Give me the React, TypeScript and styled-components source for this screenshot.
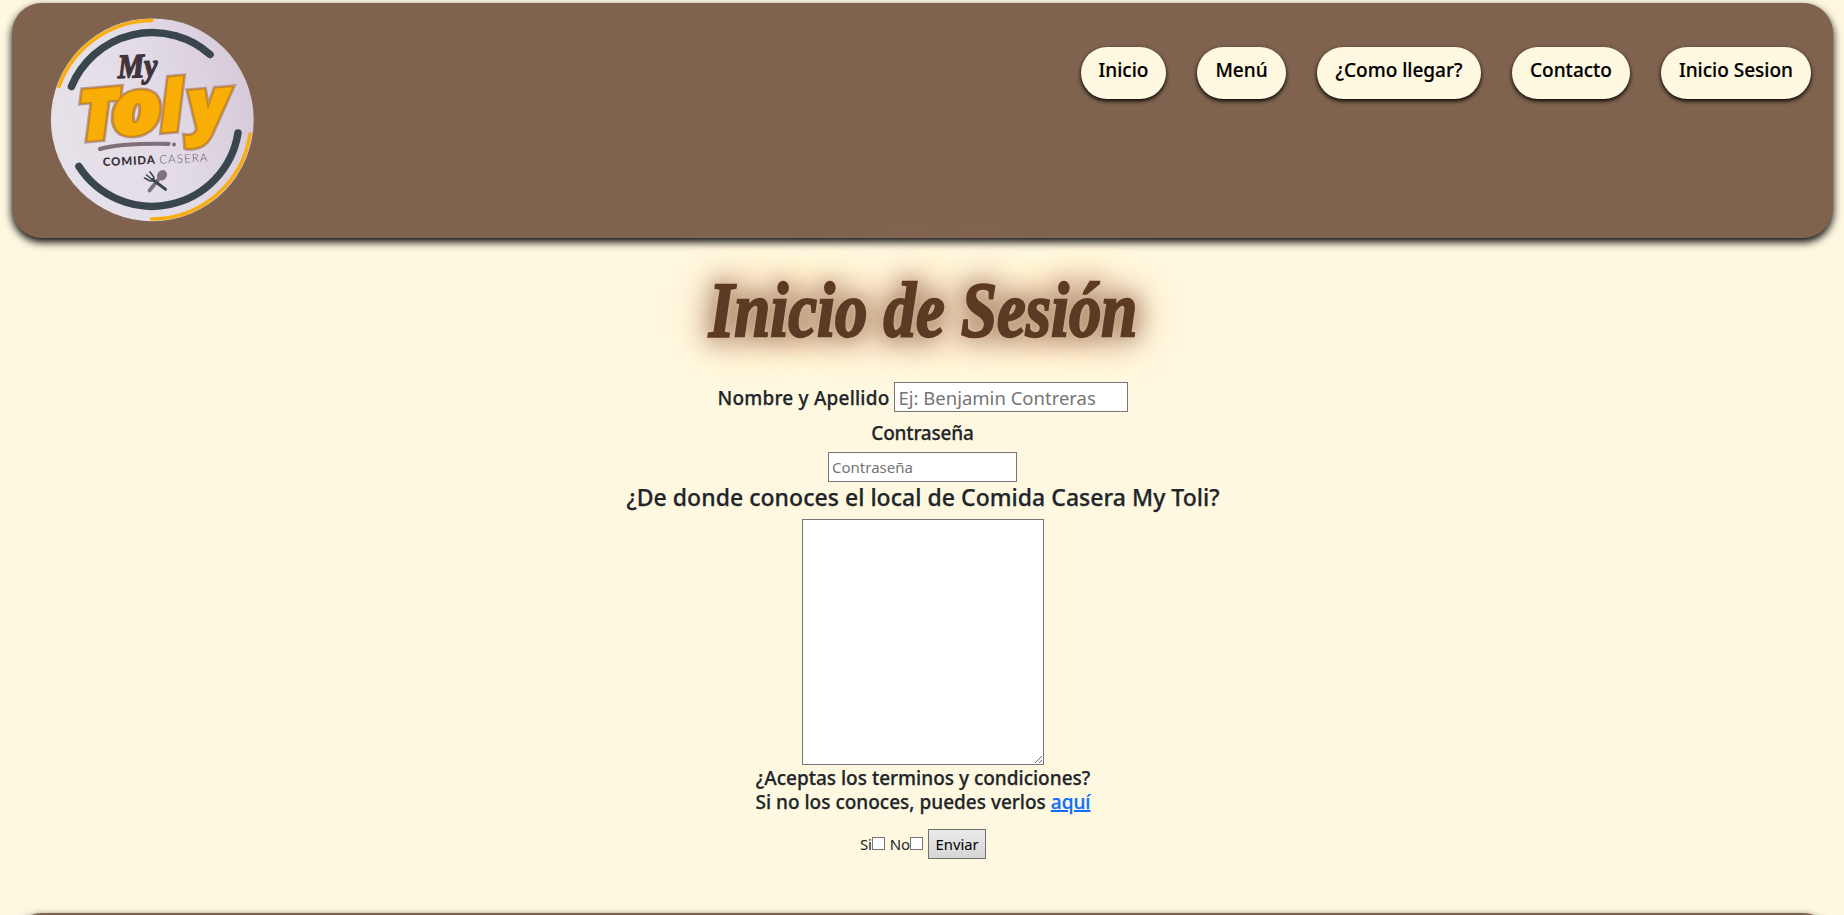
import React from 'react';
import styled, { createGlobalStyle } from 'styled-components';

const cream = '#fff8e1';
const brown = '#7f634e';

const GlobalStyle = createGlobalStyle`
  * { box-sizing: border-box; }
  html, body { margin: 0; height: 915px; overflow: hidden; }
  body {
    background: ${cream};
    color: #212529;
    font-family: 'Noto Sans', 'Open Sans', sans-serif;
    font-size: 15px;
  }
`;

const Page = styled.div`
  height: 915px;
  overflow: hidden;
  padding: 3px 11px 0 12px;
`;

const Header = styled.header`
  display: flex;
  justify-content: space-between;
  align-items: flex-start;
  height: 235px;
  padding: 15px 22px 0 38px;
  border-radius: 30px;
  background: ${brown};
  box-shadow: 0 4px 8px #000;
`;

const LogoArt = styled.svg`
  display: block;
  width: 204px;
  height: 204px;
`;

const Nav = styled.nav`
  display: flex;
  gap: 31px;
  margin-top: 29px;
`;

const NavLink = styled.a<{ $width: number }>`
  width: ${(p) => p.$width}px;
  height: 52px;
  border-radius: 26px;
  background: ${cream};
  box-shadow: 0 2px 4px #000;
  color: #000;
  font-size: 19px;
  font-weight: 500;
  -webkit-text-stroke: 0.2px currentColor;
  line-height: 47px;
  text-align: center;
  text-decoration: none;
  white-space: nowrap;
`;

const Main = styled.main`
  display: flex;
  flex-direction: column;
  align-items: center;
  padding-left: 1px;
`;

const Title = styled.h1`
  margin: 24px 0 24px;
  height: 96px;
  font: italic 700 79px/96px 'Liberation Serif', serif;
  color: #5d3a23;
  white-space: nowrap;
  transform: scaleX(0.82);
  -webkit-text-stroke: 2.4px #5d3a23;
  text-shadow:
    0 0 5px #dfcbaa,
    0 0 20px #b08a6e,
    0 0 32px #a98466,
    0 0 36px #b8977a,
    0 0 50px #dcc3a2,
    0 0 70px #efcbb0,
    0 0 80px #f6dcc0;
`;

const Form = styled.form`
  position: relative;
  display: flex;
  flex-direction: column;
  align-items: center;
`;

const NameRow = styled.div`
  display: flex;
  align-items: center;
  gap: 5px;
  height: 30px;
  margin-bottom: 8px;
`;

const Label = styled.label`
  font-size: 19px;
  font-weight: 500;
  -webkit-text-stroke: 0.25px currentColor;
  line-height: 24px;
`;

const NameLabel = styled(Label)`
  line-height: 30px;
  padding-top: 1px;
  letter-spacing: 0.2px;
`;

const PasswordLabel = styled(Label)`
  height: 24px;
  padding: 1px 1px 0 0;
  letter-spacing: -0.2px;
  margin-bottom: 8px;
`;

const Input = styled.input<{ $width: number; $size: number }>`
  width: ${(p) => p.$width}px;
  height: 30px;
  padding: 1px 3px;
  border: 1px solid #767676;
  border-radius: 0;
  background: #fff;
  font-family: inherit;
  font-size: ${(p) => p.$size}px;
  &::placeholder { color: #757575; opacity: 1; }
`;

const PasswordInput = styled(Input)`
  margin-right: 1px;
`;

const Question = styled.h4`
  height: 29px;
  margin: 0 0 8px;
  padding-top: 1px;
  font-size: 23px;
  font-weight: 500;
  letter-spacing: 0.03px;
  -webkit-text-stroke: 0.25px currentColor;
  line-height: 29px;
`;

const Answer = styled.textarea`
  display: block;
  width: 242px;
  height: 246px;
  border: 1px solid #767676;
  border-radius: 0;
  background: #fff;
  resize: both;
`;

const Terms = styled.h5`
  height: 48px;
  margin: 0 0 16px;
  padding-top: 1px;
  font-size: 19px;
  font-weight: 500;
  -webkit-text-stroke: 0.25px currentColor;
  line-height: 24px;
  text-align: center;
  a { color: #0d6efd; text-decoration: underline; text-decoration-thickness: 2px; }
`;

const SubmitRow = styled.div`
  display: flex;
  align-items: center;
  height: 30px;
  line-height: 30px;
`;

const Option = styled.label`
  display: flex;
  align-items: center;
  margin-right: 5px;
  letter-spacing: -0.1px;
`;

const Check = styled.input`
  appearance: none;
  width: 13px;
  height: 13px;
  margin: 0 0 1px;
  border: 1px solid #767676;
  background: #fff;
`;

const Submit = styled.button`
  width: 58px;
  height: 30px;
  padding: 0 0 1px;
  border: 1px solid #707070;
  border-radius: 0;
  background: linear-gradient(#e9e9e9, #d6d6d6);
  color: #000;
  font-family: inherit;
  font-size: 14.8px;
`;

const Footer = styled.footer`
  height: 120px;
  margin-top: 54px;
  border-radius: 30px;
  background: ${brown};
  box-shadow: 0 4px 8px #000;
`;

const links = [
  { text: 'Inicio', width: 85 },
  { text: 'Menú', width: 89 },
  { text: '¿Como llegar?', width: 164 },
  { text: 'Contacto', width: 118 },
  { text: 'Inicio Sesion', width: 150 },
];

const letters = [
  { ch: 'T', x: 80, y: 140, size: 69, stretch: 1.05 },
  { ch: 'o', x: 112.5, y: 135.5, size: 75, stretch: 1.14 },
  { ch: 'l', x: 162, y: 131, size: 69, stretch: 1 },
  { ch: 'y', x: 190, y: 130, size: 70, stretch: 1.06 },
];

function Letters({ stroke, width, fill }: { stroke: string; width: number; fill: string }) {
  return (
    <g
      fontFamily="Noto Sans, sans-serif"
      fontWeight={900}
      fontStyle="italic"
      fill={fill}
      stroke={stroke}
      strokeWidth={width}
      paintOrder="stroke"
    >
      {letters.map((l) => (
        <text
          key={l.ch}
          fontSize={l.size}
          transform={`translate(${l.x} ${l.y}) rotate(-5) scale(${l.stretch} 1)`}
        >
          {l.ch}
        </text>
      ))}
    </g>
  );
}

function Logo() {
  return (
    <LogoArt viewBox="50 17.5 204 204">
      <defs>
        <linearGradient id="disc" x1="0" y1="0.6" x2="1" y2="0.3">
          <stop offset="0" stopColor="#e6e2e9" />
          <stop offset="0.5" stopColor="#e3dce7" />
          <stop offset="1" stopColor="#d6c9d9" />
        </linearGradient>
      </defs>
      <circle cx="152.3" cy="119.3" r="101.4" fill="url(#disc)" />
      <g fill="none" strokeLinecap="round">
        <path d="M71.5 86A87.3 87.3 0 0 1 210 54" stroke="#39464e" strokeWidth="7.5" />
        <path d="M79 166A87 87 0 0 0 238 132.5" stroke="#39464e" strokeWidth="7.5" />
        <path d="M59 86A99.3 99.3 0 0 1 152 20" stroke="#f8ae10" strokeWidth="3.6" />
        <path d="M250 133.500A99.3 99.3 0 0 1 151.500 218.500" stroke="#f8ae10" strokeWidth="3.6" />
      </g>
      <text
        transform="translate(118 77.500) rotate(-2) scale(0.88 1)"
        fontFamily="Liberation Serif, serif"
        fontSize="34"
        fontStyle="italic"
        fontWeight="700"
        fill="#42343c"
        stroke="#42343c"
        strokeWidth="1.4"
        strokeLinejoin="round"
      >
        My
      </text>
      <Letters stroke="#b8958f" width={7} fill="#b8958f" />
      <Letters stroke="#c88512" width={4.2} fill="#f9ae05" />
      <Letters stroke="#f9ae05" width={1.6} fill="#f9ae05" />
      <path d="M100 148.500C118 143 145 143 168.500 143.300" fill="none" stroke="#7d7078" strokeWidth="4.2" strokeLinecap="round" />
      <circle cx="174" cy="144" r="2" fill="#7d7078" />
      <g fontFamily="Lato, sans-serif" fontSize="11.4">
        <text transform="translate(103 165.500) rotate(-2.500)" textLength="52" fontWeight="900" fill="#3a3038">COMIDA</text>
        <text transform="translate(159.500 163) rotate(-2.500)" textLength="48" fontWeight="300" fill="#5a5058">CASERA</text>
      </g>
      <g strokeLinecap="round" fill="none">
        <path d="M149.500 190L158 179.500" stroke="#7d7078" strokeWidth="3.6" />
        <ellipse cx="162" cy="174.800" rx="4.700" ry="5.500" transform="rotate(38 162 174.800)" fill="#7d7078" />
        <path d="M152.500 179L165.500 188.800" stroke="#39464e" strokeWidth="3" />
        <path d="M144.500 177.500L150 180.500Q154 181 153.800 176.500L150 171.500M146.500 174.500L152 179" stroke="#39464e" strokeWidth="1.600" />
      </g>
    </LogoArt>
  );
}

export default function App() {
  return (
    <Page>
      <GlobalStyle />
      <Header>
        <Logo />
        <Nav>
          {links.map((l) => (
            <NavLink key={l.text} $width={l.width}>{l.text}</NavLink>
          ))}
        </Nav>
      </Header>
      <Main>
        <Title>Inicio de Sesión</Title>
        <Form>
          <NameRow>
            <NameLabel htmlFor="nombre">Nombre y Apellido</NameLabel>
            <Input id="nombre" $width={234} $size={18.5} placeholder="Ej: Benjamin Contreras" />
          </NameRow>
          <PasswordLabel htmlFor="clave">Contraseña</PasswordLabel>
          <PasswordInput id="clave" type="password" $width={189} $size={15} placeholder="Contraseña" />
          <Question>¿De donde conoces el local de Comida Casera My Toli?</Question>
          <Answer />
          <Terms>
            ¿Aceptas los terminos y condiciones?
            <br />
            Si no los conoces, puedes verlos <a href="#terminos">aquí</a>
          </Terms>
          <SubmitRow>
            <Option>Si<Check type="checkbox" /></Option>
            <Option>No<Check type="checkbox" /></Option>
            <Submit type="button">Enviar</Submit>
          </SubmitRow>
        </Form>
      </Main>
      <Footer />
    </Page>
  );
}
